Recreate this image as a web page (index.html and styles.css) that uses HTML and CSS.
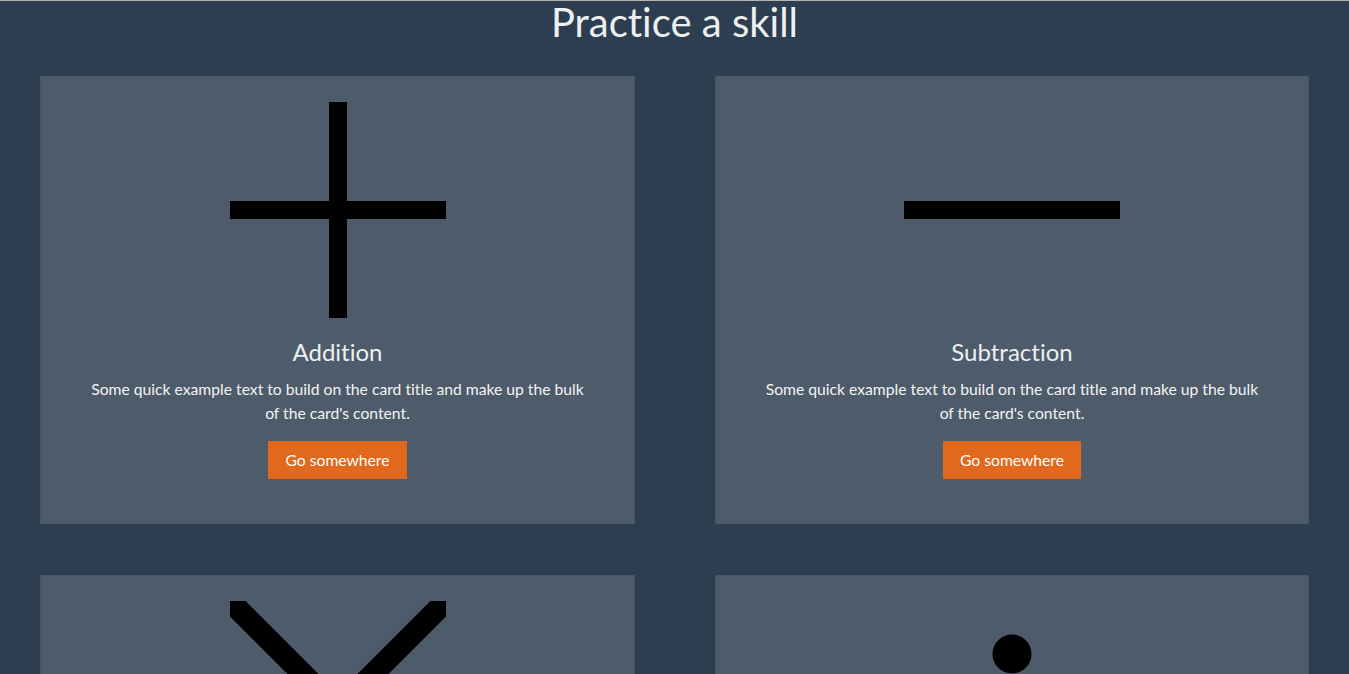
FILE: index.html
```html
<!DOCTYPE html>
<html lang="en">
<head>
<meta charset="utf-8">
<title>Practice a skill</title>
<link rel="stylesheet" href="styles.css">
</head>
<body>
<header class="page-header">
  <h1 class="page-title">Practice a skill</h1>
</header>
<main class="card-grid">
  <div class="card">
    <svg class="card-icon" viewBox="0 0 216 216" width="216" height="216">
      <rect x="99" y="0" width="18" height="216" fill="#000"/>
      <rect x="0" y="99" width="216" height="18" fill="#000"/>
    </svg>
    <div class="card-body">
      <h2 class="card-title">Addition</h2>
      <p class="card-text">Some quick example text to build on the card title and make up the bulk of the card's content.</p>
      <a class="btn" href="#">Go somewhere</a>
    </div>
  </div>
  <div class="card">
    <svg class="card-icon" viewBox="0 0 216 216" width="216" height="216">
      <rect x="0" y="99" width="216" height="18" fill="#000"/>
    </svg>
    <div class="card-body">
      <h2 class="card-title">Subtraction</h2>
      <p class="card-text">Some quick example text to build on the card title and make up the bulk of the card's content.</p>
      <a class="btn" href="#">Go somewhere</a>
    </div>
  </div>
  <div class="card">
    <svg class="card-icon" viewBox="0 0 216 216" width="216" height="216">
      <line x1="0" y1="0" x2="216" y2="216" stroke="#000" stroke-width="22" stroke-linecap="round"/>
      <line x1="216" y1="0" x2="0" y2="216" stroke="#000" stroke-width="22" stroke-linecap="round"/>
    </svg>
    <div class="card-body">
      <h2 class="card-title">Multiplication</h2>
      <p class="card-text">Some quick example text to build on the card title and make up the bulk of the card's content.</p>
      <a class="btn" href="#">Go somewhere</a>
    </div>
  </div>
  <div class="card">
    <svg class="card-icon" viewBox="0 0 216 216" width="216" height="216">
      <circle cx="108" cy="53" r="19.5" fill="#000"/>
      <rect x="0" y="99" width="216" height="18" fill="#000"/>
      <circle cx="108" cy="163" r="19.5" fill="#000"/>
    </svg>
    <div class="card-body">
      <h2 class="card-title">Division</h2>
      <p class="card-text">Some quick example text to build on the card title and make up the bulk of the card's content.</p>
      <a class="btn" href="#">Go somewhere</a>
    </div>
  </div>
</main>
</body>
</html>
```

FILE: styles.css
```css
html, body {
  margin: 0;
  padding: 0;
}
body {
  background: #2c3e50;
  border-top: 1px solid #b4b4b4;
  font-family: Lato, "Open Sans", sans-serif;
  font-variant-ligatures: none;
  color: #f2f2f2;
}
.page-header {
  height: 75px;
  display: flex;
  justify-content: center;
}
.page-title {
  margin: 0;
  font-size: 40px;
  font-weight: 400;
  line-height: 42px;
  color: #ecf0f1;
}
.card-grid {
  display: grid;
  grid-template-columns: 595px 594px;
  column-gap: 80px;
  row-gap: 51px;
  padding: 0 40px;
}
.card {
  box-sizing: border-box;
  background: #4d5b6a;
  border: 1px solid #475566;
  display: flex;
  flex-direction: column;
  align-items: center;
  padding-top: 25px;
  height: 448px;
}
.card-icon {
  display: block;
  flex: none;
}
.card-body {
  display: flex;
  flex-direction: column;
  align-items: center;
  padding: 0 45px;
  text-align: center;
}
.card-title {
  margin: 19px 0 0;
  font-size: 24px;
  font-weight: 400;
  line-height: 29px;
  color: #ecf0f1;
}
.card-text {
  margin: 11px 0 0;
  font-size: 15.7px;
  line-height: 24px;
  color: #f4f4f4;
}
.btn {
  display: inline-block;
  margin-top: 16px;
  background: #e0691d;
  color: #fff;
  text-decoration: none;
  font-size: 15.7px;
  line-height: 38px;
  height: 38px;
  padding: 0 17px;
}
```
